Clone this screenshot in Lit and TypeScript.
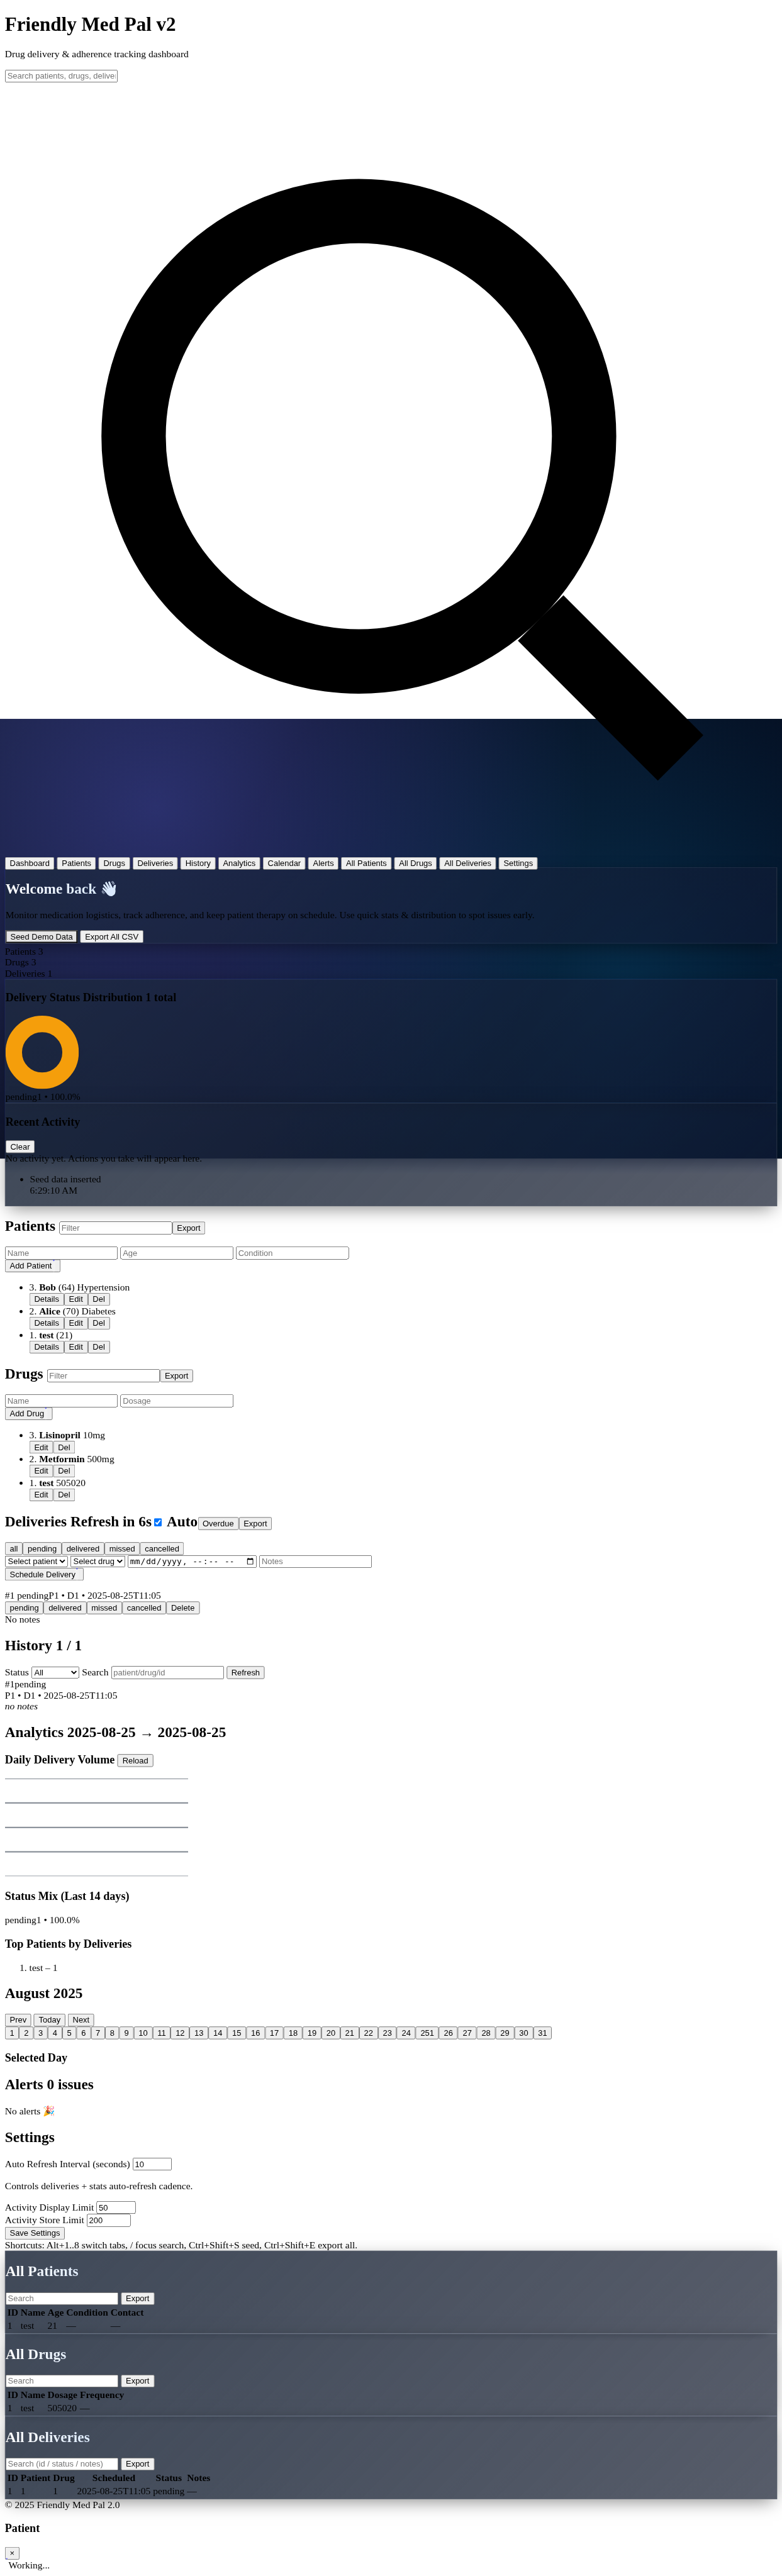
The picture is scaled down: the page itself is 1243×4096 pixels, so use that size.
import { LitElement, html, css, svg } from "lit";
import { customElement } from "lit/decorators.js";

const TABS = ["Dashboard", "Patients", "Drugs", "Deliveries", "History", "Analytics", "Calendar", "Alerts", "All Patients", "All Drugs", "All Deliveries", "Settings"];

const PATIENTS = [
  { id: 3, name: "Bob", rest: "(64) Hypertension" },
  { id: 2, name: "Alice", rest: "(70) Diabetes" },
  { id: 1, name: "test", rest: "(21)" },
];

const DRUGS = [
  { id: 3, name: "Lisinopril", rest: "10mg" },
  { id: 2, name: "Metformin", rest: "500mg" },
  { id: 1, name: "test", rest: "505020" },
];

const STATUSES = ["pending", "delivered", "missed", "cancelled"];
const DAYS = Array.from({ length: 31 }, (_, i) => i + 1);

@customElement("app-root")
export class AppRoot extends LitElement {
  static styles = css`
    :host {
      display: block;
      width: 1243px;
      height: 4096px;
      overflow: hidden;
      background: #fff;
      color: #000;
      font: 16px "Liberation Serif", serif;
    }
    .page {
      position: relative;
      z-index: 0;
      box-sizing: border-box;
      width: 1280px;
      height: 4217px;
      padding: 0 8px;
      display: flow-root;
      transform: scale(0.97115);
      transform-origin: 0 0;
    }
    .glow {
      position: absolute;
      z-index: -1;
      top: 1177px;
      left: 0;
      width: 1280px;
      height: 720px;
      background:
        radial-gradient(circle at 20% 20%, rgba(99, 102, 241, 0.35), transparent 60%),
        radial-gradient(circle at 80% 60%, rgba(14, 165, 233, 0.22), transparent 60%),
        linear-gradient(120deg, #0f172a, #020617 90%);
    }
    .glow-edge {
      position: absolute;
      z-index: -1;
      top: 1897px;
      left: 8px;
      width: 1264px;
      height: 44px;
      background: linear-gradient(rgba(10, 18, 40, 0.5), rgba(10, 18, 40, 0.25) 35%, rgba(10, 18, 40, 0.07) 70%, transparent);
    }
    .lens {
      width: 100%;
    }
    .card {
      border: 1px solid rgba(255, 255, 255, 0.08);
      background: linear-gradient(135deg, rgba(30, 41, 59, 0.85), rgba(15, 23, 42, 0.7));
      box-shadow: 0 8px 28px -6px rgba(0, 0, 0, 0.5);
      backdrop-filter: saturate(1.5) brightness(1.15);
      position: relative;
      z-index: 0;
    }
    .lifted {
      transform: translateY(-4px);
      z-index: -1;
    }
    .bright {
      background: linear-gradient(90deg, #fff, #dbeafe 12%, #bfdbfe);
      -webkit-background-clip: text;
      background-clip: text;
      color: transparent;
    }
    .hovered {
      background: #e5e5e5;
    }
    .donut {
      width: 120px;
      height: 120px;
    }
    .spin {
      border: 3px solid rgba(255, 255, 255, 0.25);
      border-top-color: #6366f1;
      border-radius: 50%;
    }
    .chart {
      width: 300px;
      height: 160px;
      overflow: hidden;
    }
    .forms {
      margin-bottom: 16px;
    }
    .num {
      box-sizing: border-box;
      width: 64px;
    }
    .num-wide {
      width: 72px;
    }
    .sel-patient { width: 103px; }
    .sel-drug { width: 90px; }
    .sel-status { width: 79px; }
  `;

  private table(title: string, hint: string, head: string[], row: string[]) {
    return html`<section class="card">
      <h2 class="bright">${title}</h2>
      <div><input placeholder=${hint}> <button>Export</button></div>
      <table>
        <thead><tr>${head.map((h) => html`<th>${h}</th>`)}</tr></thead>
        <tbody><tr>${row.map((c) => html`<td>${c}</td>`)}</tr></tbody>
      </table>
    </section>`;
  }

  render() {
    return html`<div class="page">
      <div class="glow"></div>
      <div class="glow-edge"></div>
      <header>
        <h1>Friendly Med Pal v2</h1>
        <p>Drug delivery &amp; adherence tracking dashboard</p>
        <div><input placeholder="Search patients, drugs, deliveries"> <svg class="lens" viewBox="0 0 24 24" fill="none" stroke="#000" stroke-width="2"><circle cx="11" cy="11" r="7"></circle><path d="m21 21-4.35-4.35"></path></svg></div>
      </header>
      <nav>${TABS.map((t) => html`<button>${t}</button> `)}</nav>

      <section class="card lifted">
        <h2 class="bright">Welcome back 👋</h2>
        <p>Monitor medication logistics, track adherence, and keep patient therapy on schedule. Use quick stats &amp; distribution to spot issues early.</p>
        <div><button class="hovered">Seed Demo Data</button> <button>Export All CSV</button></div>
      </section>
      <div>Patients 3</div>
      <div>Drugs 3</div>
      <div>Deliveries 1</div>
      <section class="card">
        <h3>Delivery Status Distribution 1 total</h3>
        <div><svg class="donut" viewBox="0 0 120 120"><circle cx="60" cy="60" r="46.5" fill="none" stroke="#f59e0b" stroke-width="27"></circle></svg></div>
        <div>pending1 • 100.0%</div>
      </section>
      <section class="card">
        <h3>Recent Activity</h3>
        <div><button>Clear</button></div>
        <div>No activity yet. Actions you take will appear here.</div>
        <ul><li><div>Seed data inserted</div><div>6:29:10 AM</div></li></ul>
      </section>

      <section>
        <h2>Patients <input placeholder="Filter"><button>Export</button></h2>
        <div><input placeholder="Name"> <input placeholder="Age"> <input placeholder="Condition"></div>
        <div><button>Add Patient<span class="spin"></span></button></div>
        <ul>${PATIENTS.map((p) => html`<li><div>${p.id}. <b>${p.name}</b> ${p.rest}</div><div><button>Details</button><button>Edit</button><button>Del</button></div></li>`)}</ul>
      </section>

      <section>
        <h2>Drugs <input placeholder="Filter"><button>Export</button></h2>
        <div><input placeholder="Name"> <input placeholder="Dosage"></div>
        <div><button>Add Drug<span class="spin"></span></button></div>
        <ul>${DRUGS.map((d) => html`<li><div>${d.id}. <b>${d.name}</b> ${d.rest}</div><div><button>Edit</button><button>Del</button></div></li>`)}</ul>
      </section>

      <section>
        <h2>Deliveries Refresh in 6s<label><input type="checkbox" checked> Auto</label><button>Overdue</button><button>Export</button></h2>
        <div><button>all</button>${STATUSES.map((s) => html`<button>${s}</button>`)}</div>
        <div><select class="sel-patient"><option>Select patient</option></select> <select class="sel-drug"><option>Select drug</option></select> <input type="datetime-local"> <input placeholder="Notes"></div>
        <div class="forms"><button>Schedule Delivery<span class="spin"></span></button></div>
        <div>#1 pendingP1 • D1 • 2025-08-25T11:05</div>
        <div>${STATUSES.map((s) => html`<button>${s}</button>`)}<button>Delete</button></div>
        <div>No notes</div>
      </section>

      <section>
        <h2>History 1 / 1</h2>
        <div>Status <select class="sel-status"><option>All</option></select> Search <input placeholder="patient/drug/id"> <button>Refresh</button></div>
        <div>#1pending</div>
        <div>P1 • D1 • 2025-08-25T11:05</div>
        <div><em>no notes</em></div>
      </section>

      <section>
        <h2>Analytics 2025-08-25 → 2025-08-25</h2>
        <h3>Daily Delivery Volume <button>Reload</button></h3>
        <div><svg class="chart" viewBox="0 0 300 160">${[0, 40, 80, 120, 160].map((y) => svg`<line x1="0" x2="300" y1=${y} y2=${y} stroke="#7f8690" stroke-width="2"></line>`)}</svg></div>
        <h3>Status Mix (Last 14 days)</h3>
        <div>pending1 • 100.0%</div>
        <h3>Top Patients by Deliveries</h3>
        <ol><li>test – 1</li></ol>
      </section>

      <section>
        <h2>August 2025</h2>
        <div><button>Prev</button> <button>Today</button> <button>Next</button></div>
        <div>${DAYS.map((d) => html`<button>${d}${d === 25 ? html`<span>1</span>` : ""}</button>`)}</div>
        <h3>Selected Day</h3>
      </section>

      <section>
        <h2>Alerts 0 issues</h2>
        <div>No alerts 🎉</div>
      </section>

      <section>
        <h2>Settings</h2>
        <div>Auto Refresh Interval (seconds) <input class="num" type="number" value="10"></div>
        <p>Controls deliveries + stats auto-refresh cadence.</p>
        <div>Activity Display Limit <input class="num" type="number" value="50"></div>
        <div>Activity Store Limit <input class="num num-wide" type="number" value="200"></div>
        <div><button>Save Settings</button></div>
        <div>Shortcuts: Alt+1..8 switch tabs, / focus search, Ctrl+Shift+S seed, Ctrl+Shift+E export all.</div>
      </section>

      ${this.table("All Patients", "Search", ["ID", "Name", "Age", "Condition", "Contact"], ["1", "test", "21", "—", "—"])}
      ${this.table("All Drugs", "Search", ["ID", "Name", "Dosage", "Frequency"], ["1", "test", "505020", "—"])}
      ${this.table("All Deliveries", "Search (id / status / notes)", ["ID", "Patient", "Drug", "Scheduled", "Status", "Notes"], ["1", "1", "1", "2025-08-25T11:05", "pending", "—"])}

      <footer>© 2025 Friendly Med Pal 2.0</footer>
      <h3>Patient</h3>
      <div><button>×</button></div>
      <div><span class="spin"></span>Working...</div>
    </div>`;
  }
}
